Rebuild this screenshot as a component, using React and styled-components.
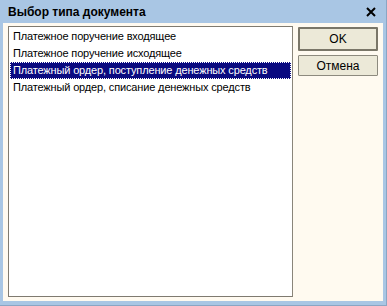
import React, { useState } from 'react';
import styled, { createGlobalStyle } from 'styled-components';

const GlobalStyle = createGlobalStyle`
  html, body {
    margin: 0;
    padding: 0;
    background: #ffffff;
  }
  body {
    font-family: "Liberation Sans", Arial, sans-serif;
  }
`;

const items = [
  'Платежное поручение входящее',
  'Платежное поручение исходящее',
  'Платежный ордер, поступление денежных средств',
  'Платежный ордер, списание денежных средств',
];

export default function App() {
  const [selected, setSelected] = useState(2);

  return (
    <>
      <GlobalStyle />
      <Window>
        <TitleBar>
          <Title>Выбор типа документа</Title>
          <CloseButton aria-label="close">
            <svg width="10" height="10" viewBox="0 0 10 10">
              <path d="M1 1 L9 9 M9 1 L1 9" stroke="#000" strokeWidth="2" />
            </svg>
          </CloseButton>
        </TitleBar>
        <Client>
          <ListBox>
            {items.map((text, i) => (
              <ListItem key={text} selected={i === selected} onClick={() => setSelected(i)}>
                {text}
              </ListItem>
            ))}
          </ListBox>
          <Buttons>
            <Button isDefault>OK</Button>
            <Button>Отмена</Button>
          </Buttons>
        </Client>
      </Window>
    </>
  );
}

const Window = styled.div`
  width: 387px;
  height: 306px;
  box-sizing: border-box;
  background: #a9c6e4;
  border-bottom: 1px solid #8aa6c4;
  border-right: 1px solid #8aa6c4;
  display: flex;
  flex-direction: column;
  padding: 0 3px 4px 3px;
`;

const TitleBar = styled.div`
  height: 23px;
  display: flex;
  align-items: center;
  justify-content: space-between;
  padding: 0 6px 0 5px;
`;

const Title = styled.div`
  font-size: 12px;
  font-weight: bold;
  color: #000;
`;

const CloseButton = styled.div`
  display: flex;
  align-items: center;
  width: 12px;
  height: 12px;
  justify-content: center;
`;

const Client = styled.div`
  flex: 1;
  background: #fffaf0;
  display: flex;
  padding: 3px 5px 4px 5px;
  gap: 5px;
`;

const ListBox = styled.div`
  width: 285px;
  box-sizing: border-box;
  background: #ffffff;
  border: 1px solid #7f7a70;
  border-right-color: #8a857a;
  padding: 1px 1px;
  display: flex;
  flex-direction: column;
`;

const ListItem = styled.div`
  height: 17px;
  line-height: 17px;
  padding-left: 3px;
  font-size: 11px;
  letter-spacing: -0.15px;
  white-space: nowrap;
  box-sizing: border-box;
  color: ${(p) => (p.selected ? '#ffffff' : '#000000')};
  background: ${(p) => (p.selected ? '#0a0a80' : 'transparent')};
  outline: ${(p) => (p.selected ? '1px dotted #ffffff' : 'none')};
  outline-offset: -1px;
  cursor: default;
`;

const Buttons = styled.div`
  display: flex;
  flex-direction: column;
  gap: 4px;
  padding-top: 1px;
`;

const Button = styled.button`
  width: 80px;
  height: ${(p) => (p.isDefault ? '24px' : '21px')};
  box-sizing: border-box;
  background: #ece9d8;
  border: ${(p) => (p.isDefault ? '2px solid #7a7668' : '1px solid #8d8a7e')};
  border-radius: 1px;
  font-family: "Liberation Sans", Arial, sans-serif;
  font-size: 12px;
  color: #000;
  padding: 0;
`;
